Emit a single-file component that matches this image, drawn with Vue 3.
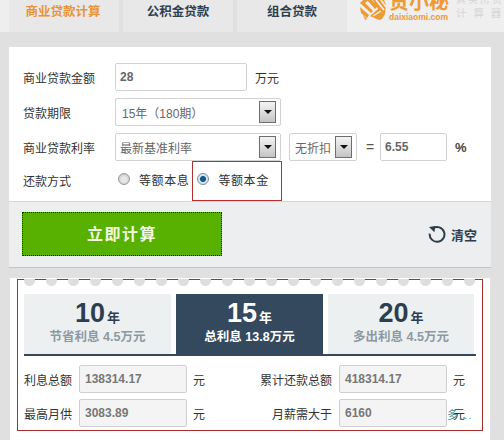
<script setup>
const plans = [
  { y: '10', note: '节省利息 4.5万元', on: false },
  { y: '15', note: '总利息 13.8万元', on: true },
  { y: '20', note: '多出利息 4.5万元', on: false }
]
const dots = Array.from({ length: 21 }, (_, i) => i)
</script>

<template>
  <div class="page">
    <nav class="tabs">
      <div class="tab active">商业贷款计算</div>
      <div class="tab">公积金贷款</div>
      <div class="tab">组合贷款</div>
      <div class="brand">
        <svg class="mark" width="27" height="21" viewBox="0 0 27 21">
          <path d="M0 3 L3 0 L9 0 L5 3 L13 11 L11 13 Z" fill="#ee9a35" />
          <path d="M7 0 L12 0 L18 6 L15 9 Z" fill="#ee9a35" />
          <path d="M0 7 L9 15 L7 18 L1 13 Z" fill="#ee9a35" />
          <path d="M3 15 L7 19 L5 20 Z" fill="#ee9a35" />
          <path d="M13 0 L24 0 L26 5 L25 14 L22 19 L19 20 L10 16 L18 9 Z" fill="#ee9a35" />
          <path d="M16 0 L24 10 M21 0 L26 7" stroke="#f3f3f3" stroke-width="1.6" fill="none" />
          <path d="M13 16 L21 11" stroke="#f3f3f3" stroke-width="1.4" fill="none" />
        </svg>
        <div class="brand-text">
          <div class="brand-name">贷小秘</div>
          <div class="brand-url">daixiaomi.com</div>
        </div>
        <div class="brand-side">
          <div class="side-a">真实房贷</div>
          <div class="side-b">计 算 器</div>
        </div>
      </div>
    </nav>

    <section class="form">
      <div class="row r1">
        <label class="lab">商业贷款金额</label>
        <div class="box amount">28</div>
        <span class="unit">万元</span>
      </div>
      <div class="row r2">
        <label class="lab">贷款期限</label>
        <div class="box select wide">
          <span class="first">15年（180期）</span>
          <i class="arrow"><b></b></i>
        </div>
      </div>
      <div class="row r3">
        <label class="lab">商业贷款利率</label>
        <div class="box select wide">
          <span>最新基准利率</span>
          <i class="arrow"><b></b></i>
        </div>
        <div class="box select discount">
          <span>无折扣</span>
          <i class="arrow"><b></b></i>
        </div>
        <span class="eq">=</span>
        <div class="box rate">6.55</div>
        <span class="pct">%</span>
      </div>
      <div class="row r4">
        <label class="lab">还款方式</label>
        <span class="radio"></span>
        <span class="opt">等额本息</span>
        <div class="mark-box">
          <span class="radio on"></span>
          <span class="opt">等额本金</span>
        </div>
      </div>
    </section>

    <section class="actions">
      <button class="go">立即计算</button>
      <div class="clear">
        <svg width="18" height="18" viewBox="0 0 18 18">
          <path d="M5 3.2 A7.4 7.4 0 1 1 1.7 8.6" fill="none" stroke="#2f3d4a" stroke-width="2" />
          <path d="M1 2 L7.4 1 L6.4 7.2 Z" fill="#2f3d4a" />
        </svg>
        <span>清空</span>
      </div>
    </section>

    <section class="result">
      <div class="frame">
        <div class="holes">
          <i v-for="d in dots" :key="d"></i>
        </div>
        <div class="plans">
          <div v-for="p in plans" :key="p.y" class="plan" :class="{ on: p.on }">
            <div class="years"><strong>{{ p.y }}</strong><em>年</em></div>
            <div class="note">{{ p.note }}</div>
          </div>
        </div>
        <div class="grid">
          <span class="k">利息总额</span>
          <div class="val">138314.17</div>
          <span class="yuan">元</span>
          <span class="k k2">累计还款总额</span>
          <div class="val">418314.17</div>
          <span class="yuan">元</span>
          <span class="k">最高月供</span>
          <div class="val">3083.89</div>
          <span class="yuan">元</span>
          <span class="k k2">月薪需大于</span>
          <div class="val">6160</div>
          <span class="yuan last"><i class="more">多...</i>元</span>
        </div>
      </div>
    </section>
  </div>
</template>

<style>
html, body { margin: 0; padding: 0; }
</style>

<style scoped>
.page {
  width: 504px;
  height: 440px;
  overflow: hidden;
  background: #e0e0e0;
  font-family: "Liberation Sans", "Noto Sans CJK SC", sans-serif;
  font-size: 12px;
  color: #333;
}
.tabs {
  display: flex;
  height: 32px;
  padding-left: 9px;
  background: #e0e0e0;
  box-shadow: inset 9px 0 0 #eeeeee;
}
.tab {
  width: 110px;
  margin-right: 4px;
  background: #e8e8e8;
  text-align: center;
  line-height: 25px;
  font-weight: 700;
  font-size: 12.5px;
  color: #2f3e4d;
}
.tab:first-child { padding-right: 2px; width: 108px; margin-right: 4px; }
.tab:nth-child(3) { margin-right: 0; }
.tab.active { color: #e8953a; }
.brand {
  flex: 1;
  display: flex;
  background: #efefef;
  overflow: hidden;
  padding-left: 13px;
}
.mark { flex: none; }
.brand-text { margin-left: 2px; width: 62px; flex: none; }
.brand-name {
  font-size: 20px;
  font-weight: 700;
  line-height: 20px;
  margin-top: -8px;
  color: #ee9a35;
  white-space: nowrap;
}
.brand-url {
  font-size: 8.5px;
  font-weight: 700;
  color: #ee9a35;
  line-height: 8px;
  margin-top: 1px;
  white-space: nowrap;
}
.brand-side { margin-left: 5px; color: #d6d6d6; white-space: nowrap; }
.side-a { font-size: 10px; line-height: 10px; margin-top: -5px; letter-spacing: 2px; }
.side-b { font-size: 10.5px; line-height: 11px; margin-top: 3px; letter-spacing: 2px; }

.form {
  margin: 15px 13px 0 9px;
  height: 154px;
  background: #fff;
  padding: 16px 0 0 14px;
  box-sizing: border-box;
}
.row { display: flex; align-items: center; }
.r1, .r2, .r3 { height: 28px; }
.r2 { margin-top: 7px; }
.r3 { margin-top: 7px; }
.lab { width: 92px; flex: none; white-space: nowrap; color: #333; }
.box {
  box-sizing: border-box;
  height: 28px;
  border: 1px solid #d2d2d2;
  border-radius: 2px;
  background: #fff;
  display: flex;
  align-items: center;
  color: #666;
}
.amount { width: 132px; padding-left: 4px; font-weight: 700; color: #666; }
.unit { margin-left: 8px; }
.select { position: relative; }
.wide { width: 166px; padding-left: 4px; }
.first { margin-left: 2px; white-space: nowrap; }
.arrow {
  position: absolute;
  top: 2px;
  right: 4px;
  box-sizing: border-box;
  width: 17px;
  height: 22px;
  border: 1px solid #6e6e6e;
  background: linear-gradient(#f4f4f4, #c4c4c4);
  display: flex;
  align-items: center;
  justify-content: center;
}
.arrow b {
  width: 0;
  height: 0;
  border: 4px solid transparent;
  border-top-color: #111;
  border-bottom-width: 0;
}
.discount { width: 68px; margin-left: 8px; padding-left: 5px; }
.eq { margin-left: 9px; width: 14px; color: #555; font-size: 14px; }
.rate { width: 67px; padding-left: 4px; font-weight: 700; }
.pct { margin-left: 8px; font-weight: 700; font-size: 13px; color: #444; }
.r4 { height: 40px; }
.r4 .lab { margin-top: -2px; }
.radio {
  box-sizing: border-box;
  flex: none;
  width: 12px;
  height: 12px;
  margin: -5px 9px 0 3px;
  border-radius: 50%;
  border: 1px solid #9a9a9a;
  background: radial-gradient(circle at 50% 55%, #e8e8e8 30%, #c4c4c4 85%);
}
.radio.on {
  margin-left: 4px;
  border-color: #7b8c9a;
  background: radial-gradient(circle, #0f5c8c 38%, #cfe0ea 46%, #eef3f6 100%);
}
.opt { letter-spacing: 0.6px; white-space: nowrap; margin-top: -4px; margin-right: 3px; color: #333; }
.mark-box {
  box-sizing: border-box;
  width: 90px;
  height: 40px;
  border: 1px solid #b3312f;
  display: flex;
  align-items: center;
}

.actions {
  box-sizing: border-box;
  margin: 0 13px 0 9px;
  height: 67px;
  background: #eceef0;
  border-top: 1px solid #d4d6d8;
  border-bottom: 1px solid #c4c4c4;
  display: flex;
  align-items: center;
  padding: 0 14px 1px 13px;
}
.go {
  width: 200px;
  height: 44px;
  background: #58b000;
  border: 1px dotted #123300;
  color: #f2fbe0;
  font-family: "Noto Sans CJK SC", serif;
  font-size: 16px;
  font-weight: 700;
  letter-spacing: 1.5px;
  padding: 0 0 3px 0;
}
.clear {
  margin-left: auto;
  display: flex;
  align-items: center;
  gap: 5px;
  font-size: 13px;
  font-weight: 700;
  color: #2f3d4a;
}

.result {
  margin: 10px 14px 0 10px;
  height: 162px;
  background: #fff;
  padding: 1px 7px 0;
  box-sizing: border-box;
}
.frame {
  position: relative;
  box-sizing: border-box;
  height: 152px;
  border: 1px solid #a92f2f;
  padding: 14px 6px 0 6px;
  width: 466px;
}
.holes {
  position: absolute;
  top: -1px;
  left: 6px;
  display: flex;
  gap: 11px;
  height: 8px;
  overflow: hidden;
}
.holes i {
  flex: none;
  width: 11px;
  height: 11px;
  margin-top: -4px;
  border-radius: 50%;
  background: #dedede;
}
.plans {
  display: flex;
  gap: 5px;
  border-bottom: 2px solid #34495e;
  width: 452px;
}
.plan {
  width: 147px;
  height: 60px;
  background: #ecf0f1;
  text-align: center;
  color: #2c3e50;
}
.plan:last-child { width: 146px; }
.plan.on { background: #34495e; color: #fff; }
.years { height: 33px; line-height: 38px; }
.years strong { font-size: 27px; font-weight: 700; }
.years em { font-style: normal; font-size: 13px; font-weight: 700; margin-left: 2px; }
.note { font-size: 12.5px; line-height: 16px; margin-top: 2px; font-weight: 700; color: #8e98a2; }
.plan.on .note { color: #fff; }
.grid {
  display: grid;
  grid-template-columns: 55px 108px 32px 120px 108px 29px;
  grid-auto-rows: 28px;
  row-gap: 6px;
  margin-top: 9px;
  align-items: center;
  width: 452px;
}
.k { white-space: nowrap; color: #333; }
.k2 { text-align: right; padding-right: 7px; }
.val {
  box-sizing: border-box;
  height: 28px;
  width: 108px;
  border: 1px solid #cfcfcf;
  border-radius: 2px;
  background: #f4f4f4;
  color: #777;
  display: flex;
  align-items: center;
  padding-left: 5px;
  font-weight: 700;
}
.yuan { padding-left: 6px; position: relative; }
.more {
  position: absolute;
  left: 0;
  top: 1px;
  font-style: normal;
  font-size: 11px;
  color: #3a8fa0;
  white-space: nowrap;
  letter-spacing: 1.5px;
}
</style>
